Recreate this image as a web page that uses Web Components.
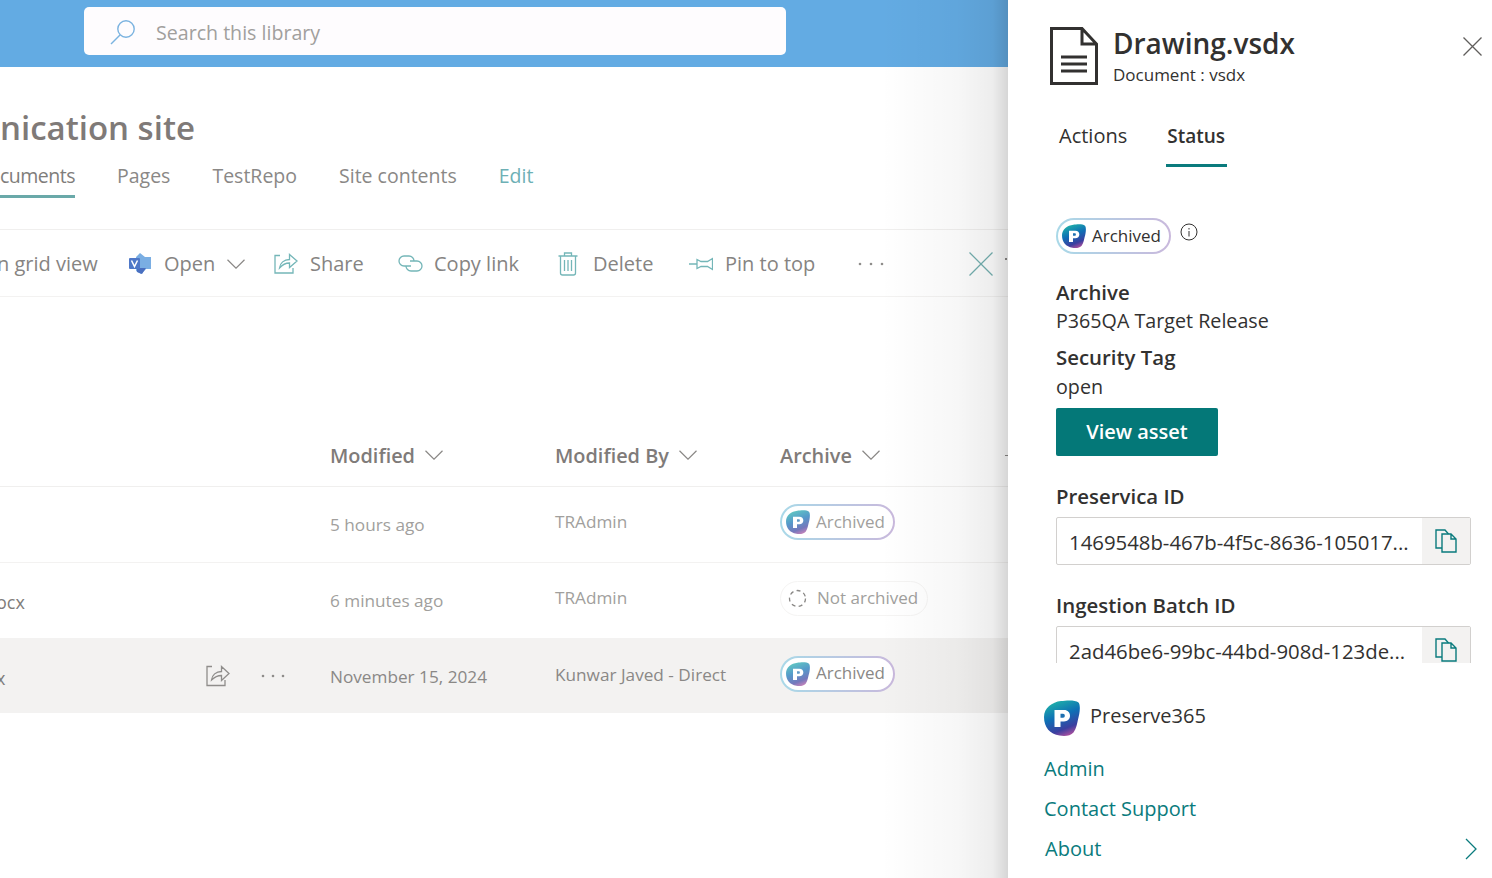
<!DOCTYPE html>
<html lang="en">
<head>
<meta charset="utf-8">
<title>Drawing.vsdx</title>
<style>
  html, body { margin: 0; height: 100%; overflow: hidden; background: #fff; }
  body { font-family: "Open Sans", "Noto Sans", sans-serif; }
</style>
</head>
<body>
<app-shell></app-shell>
<script>
const LOGO = (size, dim) => /* html */`
<svg width="${size}" height="${size}" viewBox="0 0 36 36" style="display:block;flex:none;opacity:${dim ? .7 : 1}">
  <defs>
    <linearGradient id="lg" x1="0.25" y1="0" x2="0.65" y2="1">
      <stop offset="0" stop-color="#1fb5a8"/>
      <stop offset=".45" stop-color="#0f6fb5"/>
      <stop offset=".8" stop-color="#3b3fa0"/>
      <stop offset="1" stop-color="#a84f9e"/>
    </linearGradient>
  </defs>
  <path d="M0 17C0 8 8 2 17 1c5-.6 14-1.500 17.500 1.500 2.500 3 1 12-.5 17-1 4-1.500 9-4.500 13-3 3.500-9 4-14 3C6 34.500 0 27 0 17z" fill="url(#lg)"/>
  <path d="M10.500 10h9.500c3.800 0 6 2.500 6 5.800s-2.400 5.700-6 5.700h-3.500V27h-6z" fill="#fff"/>
  <path d="M16.500 13.800v4h2.500c1.200 0 1.800-.8 1.800-2s-.6-2-1.800-2z" fill="#1d6fb0"/>
</svg>`

class StatusBadge extends HTMLElement {
  static get style() {
    return /* css */`
    :host { display: inline-block; }
    .badge {
      display: inline-flex;
      align-items: center;
      box-sizing: border-box;
      height: 36px;
      border-radius: 18px;
      border: 2px solid transparent;
      padding: 0 8px 0 4px;
      gap: 6px;
      font-size: 17px;
      white-space: nowrap;
      background: linear-gradient(#fff, #fff) padding-box, linear-gradient(90deg, #a9d9e8, #c9b8dc) border-box;
    }
    .badge .txt { margin-top: -2px; }
    .none {
      height: 35px;
      background: #fff;
      border: 1.500px solid #f5f4f3;
      padding: 0 9px 0 7px;
      gap: 10px;
    }
    `
  }

  connectedCallback() {
    const none = this.hasAttribute('none')
    const dim = this.hasAttribute('dim')
    const icon = none
      ? `<svg width="19" height="19" viewBox="0 0 19 19"><circle cx="9.500" cy="9.500" r="8" fill="none" stroke="#8a8886" stroke-width="1.300" stroke-dasharray="4 3.300"/></svg>`
      : LOGO(24, dim)
    this.attachShadow({ mode: 'open' }).innerHTML = /* html */`
    <style>${StatusBadge.style}</style>
    <span class="badge ${none ? 'none' : ''}">${icon}<span class="txt"><slot></slot></span></span>`
  }
}
customElements.define('status-badge', StatusBadge)

class CmdButton extends HTMLElement {
  static get style() {
    return /* css */`
    :host {
      display: flex;
      align-items: center;
      gap: var(--cmd-gap, 12px);
      flex: none;
      white-space: nowrap;
      font-size: 20px;
      color: #868482;
    }
    svg { display: block; flex: none; }
    `
  }

  connectedCallback() {
    this.attachShadow({ mode: 'open' }).innerHTML = /* html */`
    <style>${CmdButton.style}</style>
    <slot name="icon"></slot><slot></slot>`
  }
}
customElements.define('cmd-button', CmdButton)

class DocRow extends HTMLElement {
  static get style() {
    return /* css */`
    :host {
      display: grid;
      grid-template-columns: 330px 225px 225px 1fr;
      align-items: center;
      height: 75px;
      border-bottom: 1px solid #f3f2f1;
      font-size: 17.200px;
      color: #a19f9d;
    }
    :host([selected]) { background: #f3f2f1; border-bottom: 0; height: 74px; color: #8a8886; }
    .name { display: flex; align-items: center; color: #7f7d7b; font-size: 18px; margin-left: -4px; padding-top: 3px; }
    .actions { margin-left: auto; display: flex; align-items: center; gap: 31px; padding-right: 45px; margin-top: -3px; }
    .mod { padding-bottom: 1px; }
    .by { margin-top: -7px; }
    :host([selected]) .mod { padding: 1px 0 0; }
    :host([selected]) .by { margin-top: -3px; }
    .st { margin-top: -5px; }
    svg { display: block; }
    `
  }

  connectedCallback() {
    const sel = this.hasAttribute('selected')
    const actions = sel ? /* html */`
      <div class="actions">
        <svg width="24" height="22" viewBox="0 0 24 22" fill="none" stroke="#8f8d8b" stroke-width="1.300"><path d="M6 1.500H1v19h18V15"/><path d="M5.500 15c.5-5 4.500-8.500 10-8.500V1.500L23 8.500l-7.500 7v-5c-4 0-7 1.500-10 4.500z"/></svg>
        <svg width="24" height="4" viewBox="0 0 24 4" fill="#8f8d8b"><circle cx="2" cy="2" r="1.300"/><circle cx="12" cy="2" r="1.300"/><circle cx="22" cy="2" r="1.300"/></svg>
      </div>` : ''
    this.attachShadow({ mode: 'open' }).innerHTML = /* html */`
    <style>${DocRow.style}</style>
    <div class="name"><span>${this.getAttribute('name') || ''}</span>${actions}</div>
    <div class="mod">${this.getAttribute('modified')}</div>
    <div class="by">${this.getAttribute('by')}</div>
    <div class="st"><slot></slot></div>`
  }
}
customElements.define('doc-row', DocRow)

class LibraryView extends HTMLElement {
  static get style() {
    return /* css */`
    :host {
      display: block;
      position: relative;
      width: 1008px;
      height: 878px;
      overflow: hidden;
      flex: none;
      background: #fff;
    }
    .top {
      height: 67px;
      box-sizing: border-box;
      padding: 7px 222px 12px 84px;
      background: #63abe3;
    }
    .search {
      display: flex;
      align-items: center;
      height: 48px;
      box-sizing: border-box;
      gap: 20px;
      padding: 2px 0 0 26px;
      background: #fefcfe;
      border-radius: 5px;
      font-size: 19.600px;
      color: #a19f9d;
    }
    .title {
      margin: 42px 0 0;
      height: 40px;
      line-height: 38px;
      font-size: 33px;
      font-weight: 600;
      color: #7f7a78;
      white-space: nowrap;
    }
    .nav {
      display: flex;
      gap: 42px;
      height: 74px;
      box-sizing: border-box;
      margin-top: 7px;
      border-bottom: 1px solid #f0efee;
      font-size: 19.500px;
      color: #8a8886;
      padding-top: 7px;
    }
    .nav span { height: 35px; line-height: 26px; box-sizing: border-box; }
    .nav .on { border-bottom: 3px solid #6aa9a9; color: #7f7d7b; font-weight: 500; letter-spacing: -.5px; }
    .nav .edit { color: #6db0b5; }
    .cmd {
      display: flex;
      align-items: center;
      height: 65px;
      padding-top: 1px;
      border-bottom: 1px solid #f3f2f1;
    }
    .cmd .clip { margin-left: -3px; width: 132px; }
    .head {
      display: grid;
      grid-template-columns: 225px 225px 1fr;
      align-items: center;
      height: 62px;
      margin-top: 127px;
      padding: 0 0 0 330px;
      border-bottom: 1px solid #f0efee;
      font-size: 19.900px;
      font-weight: 600;
      color: #7f7b79;
    }
    .head span { display: flex; align-items: center; gap: 10px; }
    .tick {
      position: absolute;
      width: 2px;
      height: 2px;
      left: 1005px;
      background: #8a8886;
    }
    .shade {
      position: absolute;
      top: 0;
      right: 0;
      bottom: 0;
      width: 128px;
      background: linear-gradient(90deg, rgba(0,0,0,0), rgba(0,0,0,.03) 60%, rgba(0,0,0,.07) 88%, rgba(0,0,0,.16));
      pointer-events: none;
    }
    svg { display: block; flex: none; }
    `
  }

  connectedCallback() {
    const chev = (c = '#8a8886') => `<svg width="18" height="10" viewBox="0 0 18 10" fill="none" stroke="${c}" stroke-width="1.200"><path d="M.5.800 9 9.200 17.500.800"/></svg>`
    this.attachShadow({ mode: 'open' }).innerHTML = /* html */`
    <style>${LibraryView.style}</style>
    <div class="top">
      <div class="search">
        <svg width="26" height="26" viewBox="0 0 26 26" fill="none" stroke="#7bb3e0" stroke-width="1.400"><circle cx="16" cy="10" r="8.200"/><path d="M10 16 1 25"/></svg>
        <span>Search this library</span>
      </div>
    </div>
    <h1 class="title">nication site</h1>
    <div class="nav">
      <span class="on">cuments</span><span>Pages</span><span>TestRepo</span><span>Site contents</span><span class="edit">Edit</span>
    </div>
    <div class="cmd">
      <cmd-button class="clip">n grid view</cmd-button>
      <cmd-button style="width:145px">
        <svg slot="icon" width="23" height="22" viewBox="0 0 23 22"><path d="M11 0l5 4h6v12h-5l-5 5-5-3V4z" fill="#7aaee3"/><path d="M8 15h9l-4 6-5-2z" fill="#4a6fc0"/><rect x="0" y="5" width="11" height="11" rx="1" fill="#4f78c8"/><path d="M2.500 7.500 5.500 13.500 8.500 7.500" fill="none" stroke="#fff" stroke-width="1.500"/></svg>
        <span>Open</span>${chev()}
      </cmd-button>
      <cmd-button style="width:124px">
        <svg slot="icon" width="24" height="21" viewBox="0 0 24 21" fill="none" stroke="#74b6b8" stroke-width="1.300"><path d="M6 2.500H1V20h18v-5"/><path d="M5.500 15c.5-5 4.500-8.500 10-8.500V1.500L23 8l-7.500 6.500V10c-4 0-7 1.500-10 5z"/></svg>
        <span>Share</span>
      </cmd-button>
      <cmd-button style="width:160px; --cmd-gap:11px">
        <svg slot="icon" width="25" height="17" viewBox="0 0 25 17" fill="none" stroke="#74b6b8" stroke-width="1.300"><path d="M13 11H6A5 5 0 0 1 6 1h5a5 5 0 0 1 5 5"/><path d="M12 6h7a5 5 0 0 1 0 10h-6a5 5 0 0 1-5-5"/></svg>
        <span>Copy link</span>
      </cmd-button>
      <cmd-button style="width:131px; --cmd-gap:15px">
        <svg slot="icon" width="20" height="24" viewBox="0 0 20 24" fill="none" stroke="#74b6b8" stroke-width="1.300"><path d="M.5 4h19M6.500 4V1h7v3M2.500 4v17a2 2 0 0 0 2 2h11a2 2 0 0 0 2-2V4M6.500 8v11M10 8v11M13.500 8v11"/></svg>
        <span>Delete</span>
      </cmd-button>
      <cmd-button style="width:169px">
        <svg slot="icon" width="24" height="16" viewBox="0 0 24 16" fill="none" stroke="#74b6b8" stroke-width="1.300"><path d="M0 8h8M8 3.500l4 2h6.500l5-3v11l-5-3H12l-4 2z"/></svg>
        <span>Pin to top</span>
      </cmd-button>
      <cmd-button style="width:111px">
        <svg slot="icon" width="26" height="4" viewBox="0 0 26 4" fill="#8f8d8b"><circle cx="2" cy="2" r="1.300"/><circle cx="13" cy="2" r="1.300"/><circle cx="24" cy="2" r="1.300"/></svg>
      </cmd-button>
      <cmd-button>
        <svg slot="icon" width="24" height="24" viewBox="0 0 24 24" fill="none" stroke="#74b0b0" stroke-width="1.300"><path d="M.5.500l23 23M23.500.500l-23 23"/></svg>
      </cmd-button>
    </div>
    <div class="head">
      <span>Modified ${chev()}</span><span>Modified By ${chev()}</span><span>Archive ${chev()}</span>
    </div>
    <doc-row modified="5 hours ago" by="TRAdmin"><status-badge dim>Archived</status-badge></doc-row>
    <doc-row name="ocx" modified="6 minutes ago" by="TRAdmin"><status-badge none>Not archived</status-badge></doc-row>
    <doc-row name="x" modified="November 15, 2024" by="Kunwar Javed - Direct" selected><status-badge dim>Archived</status-badge></doc-row>
    <i class="tick" style="top:258px"></i>
    <i class="tick" style="top:455px; width:3px; height:1px"></i>
    <div class="shade"></div>`
  }
}
customElements.define('library-view', LibraryView)

class CopyField extends HTMLElement {
  static get style() {
    return /* css */`
    :host { display: block; }
    .label { font-size: 20.400px; font-weight: 600; color: #323130; line-height: 28px; margin: -1px 0 7px; }
    .box {
      display: flex;
      height: 48px;
      box-sizing: border-box;
      border: 1px solid #d2d0ce;
      border-radius: 2px;
    }
    .val {
      flex: 1;
      min-width: 0;
      padding: 2px 0 0 12px;
      font-size: 20.350px;
      line-height: 44px;
      color: #323130;
      white-space: nowrap;
    }
    .btn {
      width: 48px;
      display: flex;
      align-items: center;
      justify-content: center;
      background: #f3f2f1;
    }
    svg { display: block; }
    `
  }

  connectedCallback() {
    this.attachShadow({ mode: 'open' }).innerHTML = /* html */`
    <style>${CopyField.style}</style>
    <div class="label">${this.getAttribute('label')}</div>
    <div class="box">
      <div class="val">${this.getAttribute('value')}</div>
      <div class="btn">
        <svg width="22" height="24" viewBox="0 0 22 24" fill="none" stroke="#0a7b7d" stroke-width="1.400"><path d="M7 19H1V1h9l3.500 4"/><path d="M7 5v18h14V10l-5-5zM16 5v5h5"/></svg>
      </div>
    </div>`
  }
}
customElements.define('copy-field', CopyField)

class SidePanel extends HTMLElement {
  static get style() {
    return /* css */`
    :host {
      display: flex;
      flex-direction: column;
      width: 484px;
      height: 878px;
      flex: none;
      background: #fff;
      color: #323130;
      overflow: hidden;
    }
    .scroll { height: 663px; flex: none; overflow: hidden; padding-left: 48px; box-sizing: border-box; }
    .hd { display: flex; gap: 15px; padding-top: 24px; height: 93px; box-sizing: border-box; position: relative; }
    .hd h2 { margin: 0; font-size: 28px; font-weight: 600; line-height: 38px; }
    .hd p { margin: 2px 0 0; font-size: 17px; line-height: 22px; }
    .hd .doc { margin: 3px 0 0 -6px; }
    .close { position: absolute; left: 407px; top: 37px; }
    .tabs { display: flex; align-items: flex-start; gap: 39px; padding-left: 3px; height: 73px; box-sizing: border-box; font-size: 20px; }
    .tabs span { height: 42px; padding-top: 29px; line-height: 28px; }
    .tabs .on { font-size: 19px; font-weight: 600; border-bottom: 3px solid #0a7b7d; padding-left: 1px; padding-right: 2px; }
    .body { padding-top: 52px; }
    .state { display: flex; align-items: flex-start; gap: 9px; height: 61px; }
    .dt { font-size: 20.400px; font-weight: 600; line-height: 28px; margin: -1px 0 1px; }
    .dd { font-size: 19.700px; line-height: 28px; margin-bottom: 9px; }
    .dd.last { margin: 2px 0 7px; }
    .view {
      width: 162px;
      height: 48px;
      box-sizing: border-box;
      padding-bottom: 2px;
      background: #047878;
      color: #fff;
      font-size: 20px;
      font-weight: 600;
      display: flex;
      align-items: center;
      justify-content: center;
      border-radius: 2px;
      margin-bottom: 27px;
    }
    copy-field { width: 415px; margin-bottom: 27px; }
    .ft { padding: 37px 0 0 36px; margin-top: -1px; }
    .brand { display: flex; align-items: center; gap: 10px; font-size: 20px; font-weight: 500; margin-bottom: 14px; }
    .brand span { margin-top: -4px; }
    .brand svg { margin: 1px 0 -1px; }
    .link { color: #0a7b7d; font-size: 20px; line-height: 40px; display: flex; align-items: center; justify-content: space-between; padding-right: 15px; }
    .link span { padding-left: 1px; }
    svg { display: block; flex: none; }
    `
  }

  connectedCallback() {
    this.attachShadow({ mode: 'open' }).innerHTML = /* html */`
    <style>${SidePanel.style}</style>
    <div class="scroll">
      <div class="hd">
        <svg class="doc" width="48" height="58" viewBox="0 0 48 58" fill="none" stroke="#323130" stroke-width="3"><path d="M1.500 1.500H32L46.500 17v39.500h-45zM32 1.500V17h14.500"/><path d="M11 30h26M11 37h26M11 44h26" stroke-width="2.800"/></svg>
        <div><h2>Drawing.vsdx</h2><p>Document : vsdx</p></div>
        <svg class="close" width="19" height="19" viewBox="0 0 19 19" fill="none" stroke="#605e5c" stroke-width="1.300"><path d="M.5.500l18 18M18.500.500l-18 18"/></svg>
      </div>
      <div class="tabs"><span>Actions</span><span class="on">Status</span></div>
      <div class="body">
        <div class="state">
          <status-badge>Archived</status-badge>
          <svg width="18" height="18" viewBox="0 0 18 18" fill="none" stroke="#323130" stroke-width="1" style="margin-top:5px"><circle cx="9" cy="9" r="8"/><path d="M9 8v5.500M9 5v1.500"/></svg>
        </div>
        <div class="dt">Archive</div>
        <div class="dd">P365QA Target Release</div>
        <div class="dt">Security Tag</div>
        <div class="dd last">open</div>
        <div class="view">View asset</div>
        <copy-field label="Preservica ID" value="1469548b-467b-4f5c-8636-105017..."></copy-field>
        <copy-field label="Ingestion Batch ID" value="2ad46be6-99bc-44bd-908d-123de..."></copy-field>
      </div>
    </div>
    <div class="ft">
      <div class="brand">${LOGO(36)}<span>Preserve365</span></div>
      <div class="link">Admin</div>
      <div class="link">Contact Support</div>
      <div class="link"><span>About</span><svg width="12" height="22" viewBox="0 0 12 22" fill="none" stroke="#0a7b7d" stroke-width="1.300"><path d="M1 1l10 10L1 21"/></svg></div>
    </div>`
  }
}
customElements.define('side-panel', SidePanel)

class AppShell extends HTMLElement {
  connectedCallback() {
    this.attachShadow({ mode: 'open' }).innerHTML = /* html */`
    <style>:host { display: flex; width: 1492px; height: 878px; overflow: hidden; }</style>
    <library-view></library-view>
    <side-panel></side-panel>`
  }
}
customElements.define('app-shell', AppShell)
</script>
</body>
</html>
